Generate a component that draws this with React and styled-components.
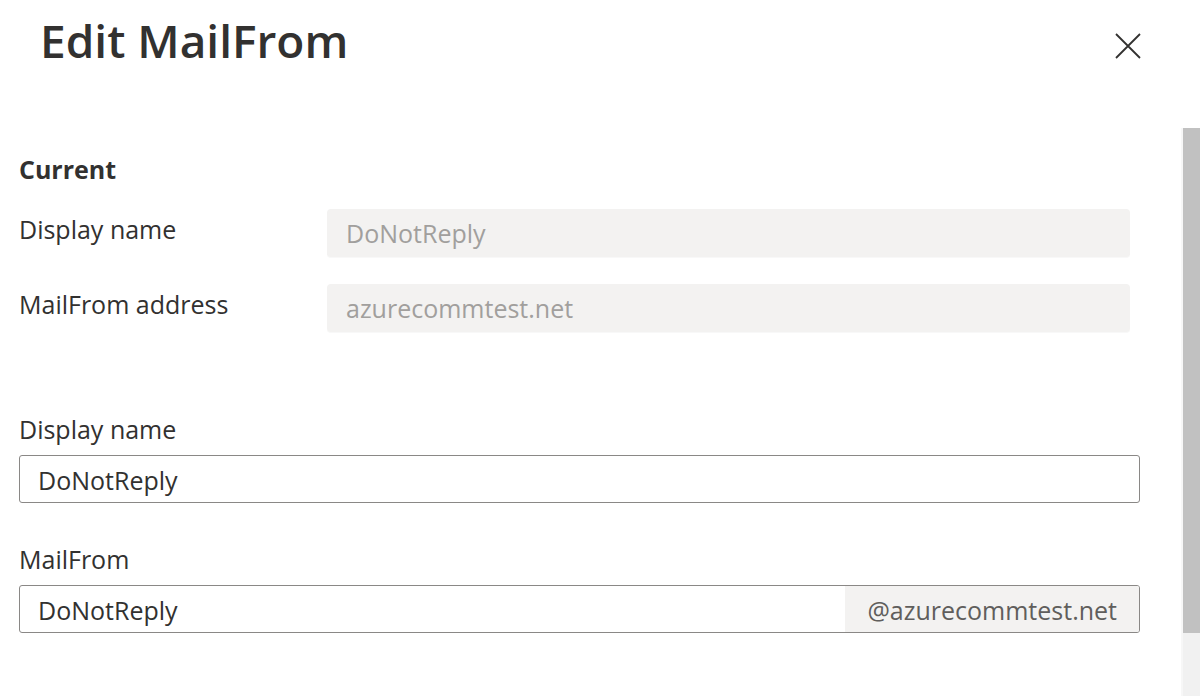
import React from 'react'
import styled, { createGlobalStyle } from 'styled-components'

const Global = createGlobalStyle`
  html, body {
    margin: 0;
    padding: 0;
    background: #ffffff;
  }
  body {
    font-family: "Open Sans", "Noto Sans", "Liberation Sans", sans-serif;
    color: #323130;
  }
  * { box-sizing: border-box; }
`

const Panel = styled.div`
  width: 1200px;
  height: 696px;
  overflow: hidden;
  display: flex;
  flex-direction: column;
`

const Header = styled.div`
  height: 128px;
  display: flex;
  justify-content: space-between;
  align-items: flex-start;
  padding: 8px 56px 0 40px;
`

const Title = styled.h1`
  margin: 0;
  font-size: 46px;
  font-weight: 600;
  line-height: 64px;
  color: #323130;
`

const CloseButton = styled.button`
  width: 32px;
  height: 32px;
  margin-top: 22px;
  padding: 0;
  border: none;
  background: transparent;
  display: flex;
  align-items: center;
  justify-content: center;
  cursor: pointer;
`

const Body = styled.div`
  flex: 1;
  display: flex;
  min-height: 0;
`

const Form = styled.div`
  flex: 1;
  padding: 25px 41px 0 19px;
  display: flex;
  flex-direction: column;
`

const SectionTitle = styled.div`
  font-size: 25px;
  font-weight: 700;
  line-height: 32px;
  margin-bottom: 24px;
`

const ReadRow = styled.div`
  display: grid;
  grid-template-columns: 308px 1fr;
  align-items: start;
  margin-right: 10px;
  margin-bottom: ${p => p.$gap || 0}px;

  & > label {
    margin-top: 4px;
  }
`

const Label = styled.label`
  font-size: 25px;
  line-height: 32px;
  color: #323130;
  display: block;
`

const ReadField = styled.div`
  height: 49px;
  background: #f3f2f1;
  border-radius: 4px;
  border-bottom: 1px solid #f8f8f8;
  padding: 0 19px;
  display: flex;
  align-items: center;
  font-size: 25px;
  color: #a19f9d;
`

const Field = styled.div`
  margin-top: ${p => p.$top}px;
  display: flex;
  flex-direction: column;
  gap: 10px;
`

const InputBox = styled.div`
  height: 48px;
  border: 1px solid #8a8886;
  border-radius: 3px;
  display: flex;
  overflow: hidden;
`

const Input = styled.input`
  flex: 1;
  min-width: 0;
  border: none;
  outline: none;
  padding: 2px 18px 0;
  font-family: inherit;
  font-size: 25px;
  color: #323130;
  background: transparent;
`

const Suffix = styled.div`
  width: 294px;
  background: #f3f2f1;
  display: flex;
  align-items: center;
  justify-content: flex-end;
  padding: 2px 22px 0 0;
  font-size: 25px;
  color: #605e5c;
`

const ScrollTrack = styled.div`
  width: 19px;
  background: #f1f1f1;
  border-left: 2px solid #f7f7f7;
`

const ScrollThumb = styled.div`
  height: 505px;
  background: #c1c1c1;
`

export default function App() {
  return (
    <Panel>
      <Global />
      <Header>
        <Title>Edit MailFrom</Title>
        <CloseButton aria-label="Close">
          <svg width="26" height="26" viewBox="0 0 26 26">
            <path d="M1 1 L25 25 M25 1 L1 25" stroke="#323130" strokeWidth="1.8" fill="none" />
          </svg>
        </CloseButton>
      </Header>
      <Body>
        <Form>
          <SectionTitle>Current</SectionTitle>
          <ReadRow $gap={26}>
            <Label>Display name</Label>
            <ReadField>DoNotReply</ReadField>
          </ReadRow>
          <ReadRow>
            <Label>MailFrom address</Label>
            <ReadField>azurecommtest.net</ReadField>
          </ReadRow>
          <Field $top={80}>
            <Label>Display name</Label>
            <InputBox>
              <Input defaultValue="DoNotReply" />
            </InputBox>
          </Field>
          <Field $top={40}>
            <Label>MailFrom</Label>
            <InputBox>
              <Input defaultValue="DoNotReply" />
              <Suffix>@azurecommtest.net</Suffix>
            </InputBox>
          </Field>
        </Form>
        <ScrollTrack>
          <ScrollThumb />
        </ScrollTrack>
      </Body>
    </Panel>
  )
}
